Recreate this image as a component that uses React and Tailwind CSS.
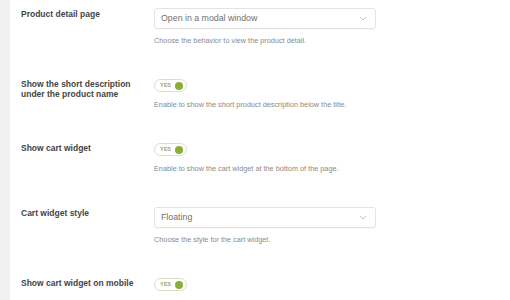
import React from 'react';

const rows = [
  { label: ['Product detail page'], type: 'select', value: 'Open in a modal window', help: 'Choose the behavior to view the product detail.' },
  { label: ['Show the short description', 'under the product name'], type: 'toggle', help: 'Enable to show the short product description below the title.' },
  { label: ['Show cart widget'], type: 'toggle', help: 'Enable to show the cart widget at the bottom of the page.' },
  { label: ['Cart widget style'], type: 'select', value: 'Floating', help: 'Choose the style for the cart widget.' },
  { label: ['Show cart widget on mobile'], type: 'toggle', help: 'Enable to show the cart widget on mobile devices.' },
];

function Select({ value }) {
  return (
    <div className="flex h-[21px] w-[222px] items-center justify-between rounded-[3px] border border-[#e3e3e3] bg-white pl-[6px] pr-[8px] shadow-[0_1px_1px_rgba(0,0,0,0.03)]">
      <span className="text-[8.8px] text-[#707070]">{value}</span>
      <svg width="8" height="5" viewBox="0 0 8 5" fill="none">
        <path d="M1 1l3 3 3-3" stroke="#c4c4c4" strokeWidth="1" />
      </svg>
    </div>
  );
}

function Toggle() {
  return (
    <div className="flex h-[13px] w-[33px] items-center justify-between rounded-full border border-[#d8dfc6] bg-white pl-[5px] pr-[3px]">
      <span className="text-[5.5px] font-bold leading-none text-[#9aa86a]">YES</span>
      <span className="h-[8px] w-[8px] rounded-full bg-[#8aac3a]" />
    </div>
  );
}

export default function App() {
  return (
    <div className="flex h-[300px] w-[510px] overflow-hidden bg-white font-['Liberation_Sans',Arial,sans-serif]">
      <div className="w-[10px] shrink-0 bg-[#f1f1f1]" />
      <div className="flex flex-col gap-[34px] pl-[11px] pt-[8px]">
        {rows.map((row, i) => (
          <div key={i} className="flex">
            <div className={`w-[133px] shrink-0 text-[8.5px] font-bold leading-[10px] text-[#444] ${row.type === 'select' ? 'pt-[1px]' : 'pt-[0px]'}`}>
              {row.label.map((l, j) => (
                <div key={j}>{l}</div>
              ))}
            </div>
            <div className="flex flex-col">
              {row.type === 'select' ? <Select value={row.value} /> : <Toggle />}
              <div className={`text-[7.3px] leading-[9px] text-[#8a8a8a] ${row.type === 'select' ? 'mt-[7px]' : 'mt-[8px]'}`}>{row.help}</div>
            </div>
          </div>
        ))}
      </div>
    </div>
  );
}
